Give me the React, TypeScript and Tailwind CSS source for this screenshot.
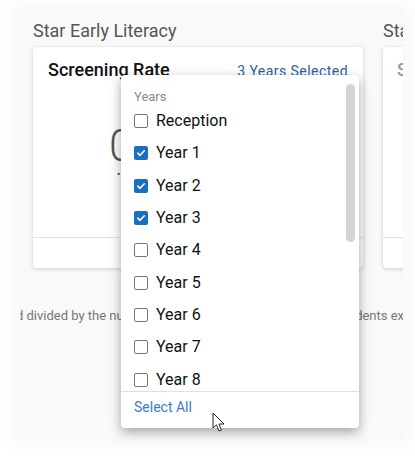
import React from "react";

const years = [
  { label: "Reception", checked: false },
  { label: "Year 1", checked: true },
  { label: "Year 2", checked: true },
  { label: "Year 3", checked: true },
  { label: "Year 4", checked: false },
  { label: "Year 5", checked: false },
  { label: "Year 6", checked: false },
  { label: "Year 7", checked: false },
  { label: "Year 8", checked: false },
];

function Checkbox({ checked }: { checked: boolean }) {
  if (checked) {
    return (
      <span className="w-[14px] h-[14px] rounded-[2px] bg-[#1a6fbf] flex items-center justify-center shrink-0">
        <svg width="10" height="10" viewBox="0 0 10 10" fill="none">
          <path d="M1.8 5.2 L4 7.3 L8.3 2.8" stroke="white" strokeWidth="1.6" strokeLinecap="round" strokeLinejoin="round" />
        </svg>
      </span>
    );
  }
  return <span className="w-[14px] h-[14px] rounded-[2px] border-[1.5px] border-[#767676] bg-white shrink-0" />;
}

function Cursor() {
  return (
    <svg className="absolute left-[212px] top-[412px]" width="14" height="21" viewBox="0 0 14 21">
      <path d="M1 1 L1 16 L4.5 12.8 L7 19 L9.4 18 L7 12 L12 12 Z" fill="white" stroke="#222" strokeWidth="1" strokeLinejoin="round" />
    </svg>
  );
}

export default function App() {
  return (
    <div className="relative w-[415px] h-[457px] bg-white overflow-hidden font-['Roboto',sans-serif]">
      {/* soft panel */}
      <div className="ml-[20px] mt-[10px] w-[383px] h-[430px] bg-[#f9f9f9] shadow-[0_0_14px_8px_#f9f9f9] overflow-hidden">
        <div className="flex gap-[20px] pl-[13px] pt-[9px]">
          {/* column 1 */}
          <div className="w-[330px] shrink-0">
            <div className="text-[18px] leading-[24px] text-[#555]">Star Early Literacy</div>
            <div className="mt-[4px] h-[221px] bg-white rounded-[4px] shadow-[0_1px_4px_rgba(0,0,0,0.18)] flex flex-col">
              <div className="flex items-baseline justify-between px-[15px] pt-[9px]">
                <span className="text-[18px] font-medium text-[#111]">Screening Rate</span>
                <span className="text-[14px] text-[#2d5fa8] tracking-[0.45px]">3 Years Selected</span>
              </div>
              <div className="flex-1 pl-[76px] pt-[40px]">
                <div className="text-[44px] leading-[46px] font-light text-[#555]">0%</div>
                <div className="pl-[8px] text-[10px] leading-[12px] text-[#444]">•</div>
              </div>
              <div className="h-[31px] border-t border-[#e2e2e2]" />
            </div>
          </div>
          {/* column 2 */}
          <div className="w-[330px] shrink-0">
            <div className="text-[18px] leading-[24px] text-[#555]">Star Early Literacy</div>
            <div className="mt-[4px] h-[221px] bg-white rounded-[4px] shadow-[0_1px_4px_rgba(0,0,0,0.18)] flex flex-col">
              <div className="px-[14px] pt-[9px]">
                <span className="text-[18px] font-medium text-[#999]">Screening Rate</span>
              </div>
              <div className="flex-1" />
              <div className="h-[31px] border-t border-[#e2e2e2]" />
            </div>
          </div>
        </div>
        <div className="mt-[38px] whitespace-nowrap text-[13px] text-[#777] -ml-[11px]">
          ed divided by the number of enrolled Reception to Year 3 students excluding
        </div>
      </div>

      {/* dropdown */}
      <div className="absolute left-[121px] top-[75px] w-[238px] h-[353px] bg-white rounded-[4px] shadow-[0_4px_12px_rgba(0,0,0,0.35)] flex flex-col overflow-hidden">
        <div className="relative h-[316px] overflow-hidden">
          <div className="pl-[13px] pt-[14px] text-[13px] leading-[16px] text-[#8a8a8a]">Years</div>
          {years.map((y) => (
            <div key={y.label} className="h-[32.3px] flex items-center gap-[8px] pl-[13px]">
              <Checkbox checked={y.checked} />
              <span className="text-[16px] text-[#111]">{y.label}</span>
            </div>
          ))}
          <div className="absolute right-[4px] top-[9px] w-[9px] h-[158px] rounded-full bg-[#d4d4d4]" />
        </div>
        <div className="border-t border-[#e0e0e0] pl-[13px] pt-[7px] text-[14px] leading-[16px] text-[#3a7bd0]">
          Select All
        </div>
      </div>

      <Cursor />
    </div>
  );
}
